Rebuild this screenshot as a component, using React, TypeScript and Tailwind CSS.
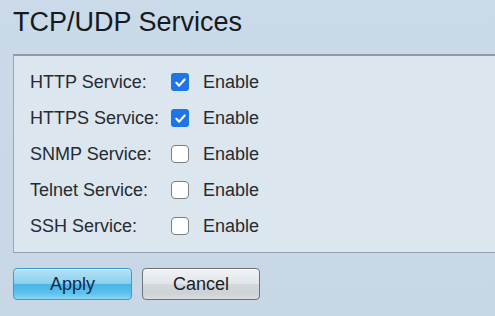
const services = [
  { name: 'HTTP Service:', enabled: true },
  { name: 'HTTPS Service:', enabled: true },
  { name: 'SNMP Service:', enabled: false },
  { name: 'Telnet Service:', enabled: false },
  { name: 'SSH Service:', enabled: false },
];

function Checkbox({ checked }: { checked: boolean }) {
  if (checked) {
    return (
      <div className="w-[18px] h-[18px] rounded-[3px] bg-[#1f74e6] flex items-center justify-center">
        <svg width="13" height="13" viewBox="0 0 12 12" fill="none">
          <path d="M2.2 6.3 L4.8 8.9 L9.8 3.2" stroke="white" strokeWidth="2" strokeLinecap="round" strokeLinejoin="round" />
        </svg>
      </div>
    );
  }
  return <div className="w-[18px] h-[18px] rounded-[4px] bg-white border-[1.5px] border-[#7a7f85]" />;
}

export default function App() {
  return (
    <div
      className="w-[495px] h-[316px] overflow-hidden bg-gradient-to-b from-[#cbdae8] to-[#c7d7e6] pl-[13px]"
      style={{ fontFamily: '"Liberation Sans", Arial, sans-serif' }}
    >
      <h1 className="pt-[9px] text-[27px] leading-[27px] text-[#141a22]">TCP/UDP Services</h1>

      <div className="mt-[18px] -mr-4 bg-[#dbe6ef] border-t-2 border-l-[1.5px] border-b-[1.5px] border-t-[#8f9ba7] border-l-[#9aa6b2] border-b-[#95a1ad] py-2 pl-4">
        {services.map((s) => (
          <div key={s.name} className="h-9 flex items-center text-[18px] text-[#262b31]">
            <span className="w-[141px]">{s.name}</span>
            <Checkbox checked={s.enabled} />
            <span className="ml-[14px]">Enable</span>
          </div>
        ))}
      </div>

      <div className="mt-[15px] flex gap-[10px]">
        <button className="w-[119px] h-[32px] rounded-[4px] border border-[#3a9ccc] bg-[linear-gradient(to_bottom,#b4e2f6_0%,#8ad2f0_48%,#48b5e6_52%,#5cc1ec_80%,#8ad6f3_100%)] text-[18px] text-[#16284a] shadow-[inset_0_1px_0_rgba(255,255,255,0.6)]">
          Apply
        </button>
        <button className="w-[118px] h-[32px] rounded-[4px] border border-[#6c737a] bg-[linear-gradient(to_bottom,#f1f3f5_0%,#e2e6e9_48%,#d3d8dc_52%,#cdd2d6_80%,#d8dde1_100%)] text-[18px] text-[#1c2026] shadow-[inset_0_1px_0_rgba(255,255,255,0.7)]">
          Cancel
        </button>
      </div>
    </div>
  );
}
